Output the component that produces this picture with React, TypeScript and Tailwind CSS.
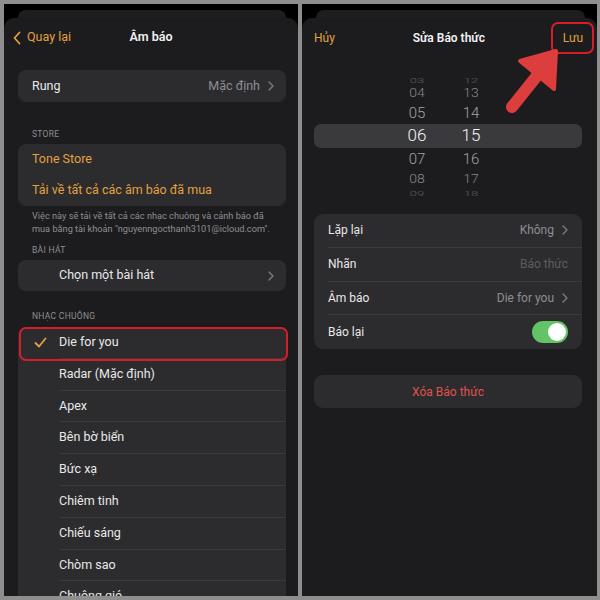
import React from "react";

const ORANGE = "text-[#e2a13f]";

function Chevron({ className = "" }: { className?: string }) {
  return (
    <svg width="6" height="10" viewBox="0 0 6 10" className={className}>
      <path d="M1 1l4 4-4 4" fill="none" stroke="#7c7c80" strokeWidth="1.4" strokeLinecap="round" strokeLinejoin="round" />
    </svg>
  );
}

function Check() {
  return (
    <svg width="13" height="11" viewBox="0 0 13 11">
      <path d="M1.5 6l3.5 3.5L11.5 1.5" fill="none" stroke="#e2a13f" strokeWidth="1.8" strokeLinecap="round" strokeLinejoin="round" />
    </svg>
  );
}

function TopStrip() {
  return (
    <div className="h-[14px] pt-[6px] shrink-0">
      <div className="ml-[14px] mr-[12px] h-[8px] rounded-t-[8px] bg-[#1e1e20]" />
    </div>
  );
}

function ListRow({ label, checked, highlight }: { label: string; checked?: boolean; highlight?: boolean }) {
  return (
    <div className="relative flex h-[31.8px] shrink-0 items-center">
      <div className="flex w-[41px] shrink-0 justify-center pl-[4px]">{checked ? <Check /> : null}</div>
      <div className="flex h-full flex-1 items-center border-b border-[#3a3a3c] text-[12.5px] text-[#e8e8ea]">{label}</div>
      {highlight ? (
        <div className="absolute left-[1px] right-[-2px] top-0 bottom-[-2px] rounded-[7px] border-[2px] border-[#d41f2b]" />
      ) : null}
    </div>
  );
}

function LeftScreen() {
  const tones = [
    "Radar (Mặc định)",
    "Apex",
    "Bên bờ biển",
    "Bức xạ",
    "Chiêm tinh",
    "Chiếu sáng",
    "Chòm sao",
    "Chuông gió",
    "Cô đơn",
  ];
  return (
    <div className="flex h-[592px] w-[294px] shrink-0 flex-col overflow-hidden bg-black">
      <TopStrip />
      <div className="flex flex-1 flex-col overflow-hidden rounded-t-[10px] bg-[#1c1c1e]">
        {/* nav */}
        <div className="relative flex h-[39px] shrink-0 items-center">
          <div className={`flex items-center gap-[6px] pl-[9px] text-[12.5px] ${ORANGE}`}>
            <svg width="8" height="14" viewBox="0 0 8 14">
              <path d="M6.5 1.5L1.5 7l5 5.5" fill="none" stroke="#e2a13f" strokeWidth="1.8" strokeLinecap="round" strokeLinejoin="round" />
            </svg>
            <span>Quay lại</span>
          </div>
          <div className="pointer-events-none absolute left-0 right-0 text-center text-[12.5px] font-semibold text-[#f2f2f4]">Âm báo</div>
        </div>
        {/* Rung */}
        <div className="ml-[14px] mr-[12px] mt-[13px] flex h-[32px] shrink-0 items-center rounded-[8px] bg-[#2c2c2e] pl-[14px] pr-[12px]">
          <span className="flex-1 text-[12.5px] text-[#e8e8ea]">Rung</span>
          <span className="mr-[8px] text-[12.5px] text-[#8e8e93]">Mặc định</span>
          <Chevron />
        </div>
        {/* STORE */}
        <div className="ml-[28px] mt-[26px] h-[12px] text-[8.5px] leading-[12px] tracking-[0.3px] text-[#8e8e93]">STORE</div>
        <div className="ml-[14px] mr-[12px] mt-[4px] flex h-[62px] shrink-0 flex-col rounded-[8px] bg-[#2c2c2e] pl-[14px]">
          <div className={`flex h-[31px] items-center text-[12.5px] ${ORANGE}`}>Tone Store</div>
          <div className={`flex h-[31px] items-center text-[12.5px] ${ORANGE}`}>Tải về tất cả các âm báo đã mua</div>
        </div>
        <div className="ml-[28px] mr-[4px] mt-[3px] whitespace-nowrap text-[9.2px] leading-[13px] text-[#8e8e93]">
          Việc này sẽ tải về tất cả các nhạc chuông và cảnh báo đã
          <br />
          mua bằng tài khoản "nguyenngocthanh3101@icloud.com".
        </div>
        <div className="ml-[28px] mt-[9px] h-[12px] text-[8.5px] leading-[12px] tracking-[0.3px] text-[#8e8e93]">BÀI HÁT</div>
        <div className="ml-[14px] mr-[12px] mt-[4px] flex h-[31px] shrink-0 items-center rounded-[8px] bg-[#2c2c2e] pl-[41px] pr-[12px]">
          <span className="flex-1 text-[12.5px] text-[#e8e8ea]">Chọn một bài hát</span>
          <Chevron />
        </div>
        <div className="ml-[28px] mt-[19px] h-[12px] text-[8.5px] leading-[12px] tracking-[0.3px] text-[#8e8e93]">NHẠC CHUÔNG</div>
        <div className="ml-[14px] mr-[12px] mt-[5px] flex flex-1 flex-col rounded-t-[8px] bg-[#2c2c2e]">
          <ListRow label="Die for you" checked highlight />
          {tones.map((t) => (
            <ListRow key={t} label={t} />
          ))}
        </div>
      </div>
    </div>
  );
}

function PickerRow({
  h,
  m,
  height,
  cls,
  selected,
}: {
  h: string;
  m: string;
  height: string;
  cls: string;
  selected?: boolean;
}) {
  return (
    <div className={`flex shrink-0 items-center ${height} ${selected ? "rounded-[7px] bg-[#3a3a3c]" : ""}`}>
      <div className={`ml-[83px] w-[40px] text-center ${cls}`}>{h}</div>
      <div className={`ml-[14px] w-[40px] text-center ${cls}`}>{m}</div>
    </div>
  );
}

function SettingRow({ label, right, last }: { label: string; right: React.ReactNode; last?: boolean }) {
  return (
    <div className="flex h-[33.75px] shrink-0 items-center pl-[14px]">
      <div className={`flex h-full flex-1 items-center pr-[14px] ${last ? "" : "border-b border-[#3a3a3c]"}`}>
        <span className="flex-1 text-[12px] text-[#e8e8ea]">{label}</span>
        {right}
      </div>
    </div>
  );
}

function RightScreen() {
  return (
    <div className="relative flex h-[592px] w-[295px] shrink-0 flex-col overflow-hidden bg-black">
      <TopStrip />
      <div className="flex flex-1 flex-col rounded-t-[10px] bg-[#1c1c1e]">
        <div className="relative flex h-[39px] shrink-0 items-center justify-between pl-[12px] pr-[14px]">
          <span className={`text-[12px] ${ORANGE}`}>Hủy</span>
          <span className="text-[12px] font-semibold text-[#f2f2f4]">Sửa Báo thức</span>
          <span className={`text-[12px] ${ORANGE}`}>Lưu</span>
        </div>
        {/* picker */}
        <div className="ml-[12px] mr-[15px] mt-[18px] flex flex-col font-light">
          <PickerRow h="03" m="12" height="h-[10px]" cls="text-[13px] leading-[13px] text-[#5e5e62] scale-y-[0.6]" />
          <PickerRow h="04" m="13" height="h-[17px]" cls="text-[14px] text-[#87878b] scale-y-[0.85]" />
          <PickerRow h="05" m="14" height="h-[22px]" cls="text-[15px] text-[#a2a2a6]" />
          <PickerRow h="06" m="15" height="h-[24px]" cls="text-[17px] text-[#f4f4f6]" selected />
          <PickerRow h="07" m="16" height="h-[22px]" cls="text-[15px] text-[#a2a2a6]" />
          <PickerRow h="08" m="17" height="h-[18px]" cls="text-[14px] text-[#87878b] scale-y-[0.85]" />
          <PickerRow h="09" m="18" height="h-[10px]" cls="text-[13px] leading-[13px] text-[#5e5e62] scale-y-[0.6]" />
        </div>
        {/* settings */}
        <div className="ml-[12px] mr-[15px] mt-[16px] flex shrink-0 flex-col rounded-[9px] bg-[#2c2c2e]">
          <SettingRow
            label="Lặp lại"
            right={
              <span className="flex items-center gap-[8px] text-[12px] text-[#8e8e93]">
                Không <Chevron />
              </span>
            }
          />
          <SettingRow label="Nhãn" right={<span className="text-[12px] text-[#5c5c60]">Báo thức</span>} />
          <SettingRow
            label="Âm báo"
            right={
              <span className="flex items-center gap-[8px] text-[12px] text-[#8e8e93]">
                Die for you <Chevron />
              </span>
            }
          />
          <SettingRow
            label="Báo lại"
            last
            right={
              <div className="flex h-[22px] w-[36px] items-center justify-end rounded-full bg-[#62c466] p-[2px]">
                <div className="h-[18px] w-[18px] rounded-full bg-white" />
              </div>
            }
          />
        </div>
        <div className="ml-[12px] mr-[15px] mt-[26px] flex h-[33px] shrink-0 items-center justify-center rounded-[9px] bg-[#2c2c2e] text-[12px] text-[#e0524d]">
          Xóa Báo thức
        </div>
      </div>
      {/* annotation: red box + arrow */}
      <div className="absolute left-[249px] top-[18px] h-[32px] w-[43px] rounded-[7px] border-[2px] border-[#d41f2b]" />
      <svg className="absolute left-0 top-0" width="295" height="200" viewBox="0 0 295 200">
        <line x1="210" y1="103" x2="238" y2="68" stroke="#dc3d3d" strokeWidth="12" strokeLinecap="round" />
        <polygon points="254,47 218,57 252,85" fill="#dc3d3d" stroke="#dc3d3d" strokeWidth="4" strokeLinejoin="round" />
      </svg>
    </div>
  );
}

export default function App() {
  return (
    <div
      className="flex h-[600px] w-[600px] gap-[4px] bg-[#8e8e8e] pb-[4px] pl-[4px] pr-[3px] pt-[4px]"
      style={{ fontFamily: "Roboto, 'Noto Sans', sans-serif" }}
    >
      <LeftScreen />
      <RightScreen />
    </div>
  );
}
